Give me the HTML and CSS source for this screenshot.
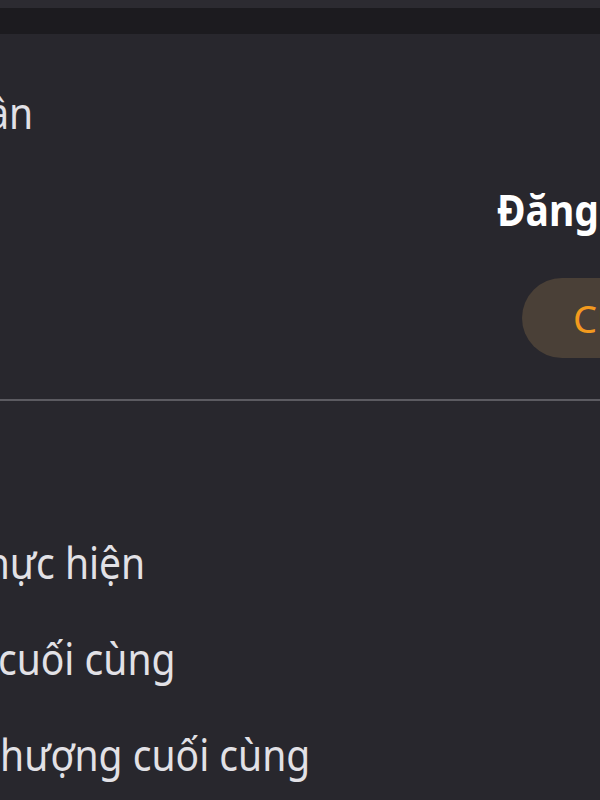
FILE: index.html
```
<!DOCTYPE html>
<html lang="vi">
<head>
  <meta charset="UTF-8" />
  <meta name="viewport" content="width=device-width, initial-scale=1.0" />
  <title>Cài đặt</title>
  <link rel="stylesheet" href="styles.css">
</head>
<body>
  <div class="statusbar"></div>
  <div class="toolbar"></div>

  <section class="summary">
    <div class="label label-count">Số lần</div>
    <div class="action">
      <div class="action-title">Đăng ký</div>
      <button class="pill">Chỉnh sửa</button>
    </div>
  </section>

  <hr class="divider">

  <ul class="list">
    <li class="item item-run">Lần thực hiện</li>
    <li class="item item-update">Cập nhật cuối cùng</li>
    <li class="item item-transfer">Chuyển nhượng cuối cùng</li>
  </ul>
</body>
</html>
```

FILE: styles.css
```
body {
  margin: 0;
  background: #28272d;
  color: #e2e1e6;
  font-family: 'Noto Sans', 'Open Sans', sans-serif;
  overflow: hidden;
  height: 800px;
}

.statusbar {
  height: 8px;
  background: #2c2b31;
}

.toolbar {
  height: 26px;
  background: #1c1b1f;
}

.summary {
  display: flex;
  flex-direction: column;
  padding: 51px 0 41px;
}

/* text on this screen is drawn slightly tall */
.label,
.action-title,
.item {
  font-size: 39px;
  line-height: 54px;
  white-space: nowrap;
  transform: scaleY(1.1);
}

.label-count {
  margin-left: -78px;
}

.action {
  display: flex;
  flex-direction: column;
  align-items: flex-start;
  margin-top: 43px;
  margin-left: 497px;
  width: 220px;
}

.action-title {
  font-weight: 700;
  color: #fff;
}

.pill {
  margin: 42px 0 0 25px;
  height: 80px;
  padding: 0 30px 0 51px;
  border: none;
  border-radius: 40px;
  background: #4a4037;
  color: #f39a1e;
  font-family: inherit;
  font-size: 38px;
  white-space: nowrap;
}

.divider {
  margin: 0;
  border: none;
  height: 2px;
  background: #5c5b61;
}

.list {
  list-style: none;
  margin: 0;
  padding: 113px 0 0;
}

.item {
  padding: 21px 0;
}

.item-run {
  margin-left: -105px;
}

.item-update {
  margin-left: -177px;
}

.item-transfer {
  margin-left: -173px;
}
```
